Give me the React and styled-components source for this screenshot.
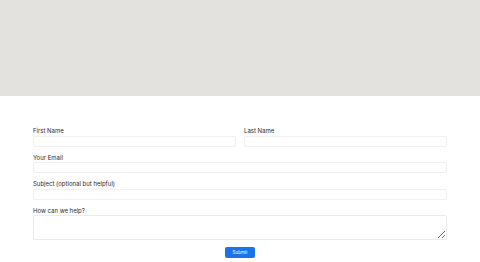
import React from 'react'
import styled, { createGlobalStyle } from 'styled-components'

const GlobalStyle = createGlobalStyle`
  * { box-sizing: border-box; }
  body {
    margin: 0;
    background: #fff;
    font-family: Inter, 'Liberation Sans', sans-serif;
    color: #222;
  }
`

const App = () => {
  return (
    <>
      <GlobalStyle />
      <Banner />
      <Form onSubmit={(e) => e.preventDefault()}>
        <Row>
          <Field>
            <Label>First Name</Label>
            <Input type='text' />
          </Field>
          <Field>
            <Label>Last Name</Label>
            <Input type='text' />
          </Field>
        </Row>
        <Field>
          <Label>Your Email</Label>
          <Input type='email' />
        </Field>
        <Field>
          <Label>Subject (optional but helpful)</Label>
          <Input type='text' />
        </Field>
        <Field>
          <Label>How can we help?</Label>
          <TextArea />
        </Field>
        <Actions>
          <Button type='submit'>Submit</Button>
        </Actions>
      </Form>
    </>
  )
}

const Banner = styled.div`
  height: 96px;
  background: #e4e2de;
`

const Form = styled.form`
  width: 414px;
  margin: 31px auto 0;
  display: flex;
  flex-direction: column;
  gap: 7px;
`

const Row = styled.div`
  display: grid;
  grid-template-columns: 1fr 1fr;
  gap: 8px;
`

const Field = styled.div`
  display: flex;
  flex-direction: column;
  gap: 1.5px;
`

const Label = styled.label`
  font-size: 6px;
  line-height: 7px;
  color: #2a2a2a;
`

const Input = styled.input`
  height: 11px;
  border: 1px solid #f0f0f0;
  border-radius: 2px;
  background: #fff;
  padding: 0 3px;
  font-size: 6px;
  outline: none;
`

const TextArea = styled.textarea`
  height: 25px;
  border: 1px solid #ebebeb;
  border-radius: 2px;
  background: #fff;
  padding: 2px 3px;
  font-size: 6px;
  outline: none;
  resize: vertical;
`

const Actions = styled.div`
  display: flex;
  justify-content: center;
`

const Button = styled.button`
  width: 30px;
  height: 11px;
  padding: 0;
  border: none;
  border-radius: 2px;
  background: #1a73e8;
  color: #fff;
  font-family: Inter, 'Liberation Sans', sans-serif;
  font-size: 4.5px;
  cursor: pointer;
`

export default App
